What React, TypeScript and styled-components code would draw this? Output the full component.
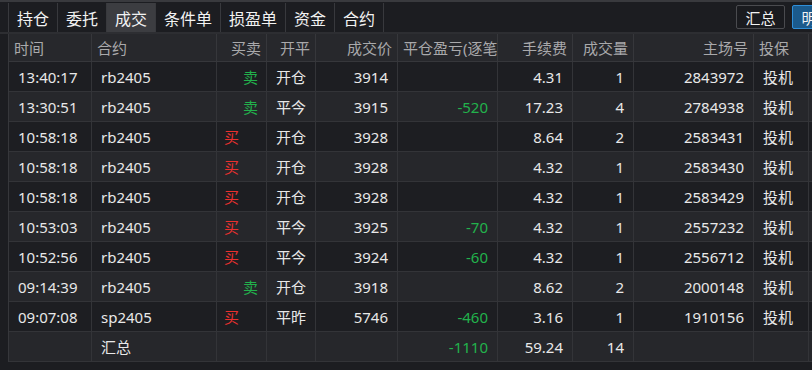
import React from 'react'
import styled, { createGlobalStyle } from 'styled-components'

const GlobalStyle = createGlobalStyle`
  html, body {
    margin: 0;
    padding: 0;
    background: #1c1d21;
  }
  body {
    font-family: "Noto Sans", "Noto Sans CJK SC", sans-serif;
    color: #e6e6e6;
  }
`

type Align = 'left' | 'right' | 'center'

type Trade = {
  time: string
  symbol: string
  side: 'buy' | 'sell'
  offset: string
  price: string
  pnl?: string
  fee: string
  qty: string
  account: string
  hedge: string
}

const trades: Trade[] = [
  { time: '13:40:17', symbol: 'rb2405', side: 'sell', offset: '开仓', price: '3914', fee: '4.31', qty: '1', account: '2843972', hedge: '投机' },
  { time: '13:30:51', symbol: 'rb2405', side: 'sell', offset: '平今', price: '3915', pnl: '-520', fee: '17.23', qty: '4', account: '2784938', hedge: '投机' },
  { time: '10:58:18', symbol: 'rb2405', side: 'buy', offset: '开仓', price: '3928', fee: '8.64', qty: '2', account: '2583431', hedge: '投机' },
  { time: '10:58:18', symbol: 'rb2405', side: 'buy', offset: '开仓', price: '3928', fee: '4.32', qty: '1', account: '2583430', hedge: '投机' },
  { time: '10:58:18', symbol: 'rb2405', side: 'buy', offset: '开仓', price: '3928', fee: '4.32', qty: '1', account: '2583429', hedge: '投机' },
  { time: '10:53:03', symbol: 'rb2405', side: 'buy', offset: '平今', price: '3925', pnl: '-70', fee: '4.32', qty: '1', account: '2557232', hedge: '投机' },
  { time: '10:52:56', symbol: 'rb2405', side: 'buy', offset: '平今', price: '3924', pnl: '-60', fee: '4.32', qty: '1', account: '2556712', hedge: '投机' },
  { time: '09:14:39', symbol: 'rb2405', side: 'sell', offset: '开仓', price: '3918', fee: '8.62', qty: '2', account: '2000148', hedge: '投机' },
  { time: '09:07:08', symbol: 'sp2405', side: 'buy', offset: '平昨', price: '5746', pnl: '-460', fee: '3.16', qty: '1', account: '1910156', hedge: '投机' },
]

const tabs = ['持仓', '委托', '成交', '条件单', '损盈单', '资金', '合约']

const columns: { title: string; align: Align }[] = [
  { title: '时间', align: 'left' },
  { title: '合约', align: 'left' },
  { title: '买卖', align: 'right' },
  { title: '开平', align: 'right' },
  { title: '成交价', align: 'right' },
  { title: '平仓盈亏(逐笔对冲)', align: 'left' },
  { title: '手续费', align: 'right' },
  { title: '成交量', align: 'right' },
  { title: '主场号', align: 'right' },
  { title: '投保', align: 'left' },
  { title: '', align: 'left' },
]

const Page = styled.div`
  width: 812px;
  height: 370px;
  overflow: hidden;
  display: flex;
  flex-direction: column;
  background: #1c1d21;
`

const TopBar = styled.div`
  display: flex;
  align-items: stretch;
  border-top: 2px solid #393a3e;
  padding-top: 1px;
  padding-left: 8px;
  box-sizing: border-box;
  height: 32px;
  background: #1c1d21;
`

const Tabs = styled.div`
  display: flex;
  border-right: 1px solid #38393d;
`

const Tab = styled.div<{ $active?: boolean }>`
  display: flex;
  align-items: center;
  padding: 0 8px;
  font-size: 16px;
  color: #f2f2f2;
  border-left: 1px solid #38393d;
  background: ${p => (p.$active ? '#3c3d41' : '#1c1d21')};
`

const Actions = styled.div`
  margin-left: auto;
  display: flex;
  align-items: flex-start;
  gap: 7px;
  padding-top: 2px;
  margin-right: -29px;
  flex-shrink: 0;
`

const ActionButton = styled.div<{ $primary?: boolean }>`
  width: 49px;
  height: 24px;
  box-sizing: border-box;
  display: flex;
  align-items: center;
  justify-content: center;
  font-size: 15px;
  color: #f2f2f2;
  border-radius: 2px;
  border: 1px solid ${p => (p.$primary ? '#2f8fd8' : '#4a4b4f')};
  background: ${p => (p.$primary ? '#1b5a8c' : '#1a1b1f')};
`

const Divider = styled.div`
  height: 2px;
  background: #2d2e32;
`

const TableArea = styled.div`
  padding-left: 8px;
  flex: 1;
`

const Grid = styled.div`
  display: grid;
  grid-template-columns: 83px 125px 50px 49px 82px 100px 75px 61px 120px 55px 60px;
  border-left: 1px solid #36373b;
  width: max-content;
`

const HeadCell = styled.div<{ $align: Align }>`
  height: 28px;
  box-sizing: border-box;
  padding: 0 5px;
  display: flex;
  align-items: center;
  justify-content: ${p =>
    p.$align === 'right' ? 'flex-end' : p.$align === 'center' ? 'center' : 'flex-start'};
  font-size: 15px;
  color: #a9a9ab;
  background: #27282c;
  border-right: 1px solid #36373b;
  border-bottom: 1px solid #36373b;
  white-space: nowrap;
  overflow: hidden;
`

const Cell = styled.div<{ $align: Align; $alt?: boolean; $tone?: 'up' | 'down' }>`
  height: 30px;
  box-sizing: border-box;
  padding: 0 9px;
  display: flex;
  align-items: center;
  justify-content: ${p =>
    p.$align === 'right' ? 'flex-end' : p.$align === 'center' ? 'center' : 'flex-start'};
  font-size: 15px;
  color: ${p => (p.$tone === 'up' ? '#e8312f' : p.$tone === 'down' ? '#22b24c' : '#e8e8e8')};
  background: ${p => (p.$alt ? '#26272b' : '#1d1e22')};
  border-right: 1px solid #333438;
  border-bottom: 1px solid #333438;
  white-space: nowrap;
  overflow: hidden;
`

const SideCell = styled(Cell)`
  padding: 0 8px 0 7px;
`

export default function App() {
  return (
    <>
      <GlobalStyle />
      <Page>
        <TopBar>
          <Tabs>
            {tabs.map(t => (
              <Tab key={t} $active={t === '成交'}>
                {t}
              </Tab>
            ))}
          </Tabs>
          <Actions>
            <ActionButton>汇总</ActionButton>
            <ActionButton $primary>明细</ActionButton>
          </Actions>
        </TopBar>
        <Divider />
        <TableArea>
          <Grid>
            {columns.map((c, i) => (
              <HeadCell key={i} $align={c.align}>
                {c.title}
              </HeadCell>
            ))}
            {trades.map((t, i) => {
              const alt = i % 2 === 1
              return (
                <React.Fragment key={i}>
                  <Cell $align="left" $alt={alt}>{t.time}</Cell>
                  <Cell $align="left" $alt={alt}>{t.symbol}</Cell>
                  <SideCell
                    $align={t.side === 'buy' ? 'left' : 'right'}
                    $alt={alt}
                    $tone={t.side === 'buy' ? 'up' : 'down'}
                  >
                    {t.side === 'buy' ? '买' : '卖'}
                  </SideCell>
                  <Cell $align="center" $alt={alt}>{t.offset}</Cell>
                  <Cell $align="right" $alt={alt}>{t.price}</Cell>
                  <Cell $align="right" $alt={alt} $tone="down">{t.pnl ?? ''}</Cell>
                  <Cell $align="right" $alt={alt}>{t.fee}</Cell>
                  <Cell $align="right" $alt={alt}>{t.qty}</Cell>
                  <Cell $align="right" $alt={alt}>{t.account}</Cell>
                  <Cell $align="left" $alt={alt}>{t.hedge}</Cell>
                  <Cell $align="left" $alt={alt} />
                </React.Fragment>
              )
            })}
            <Cell $align="left" $alt />
            <Cell $align="left" $alt>汇总</Cell>
            <Cell $align="left" $alt />
            <Cell $align="left" $alt />
            <Cell $align="left" $alt />
            <Cell $align="right" $alt $tone="down">-1110</Cell>
            <Cell $align="right" $alt>59.24</Cell>
            <Cell $align="right" $alt>14</Cell>
            <Cell $align="left" $alt />
            <Cell $align="left" $alt />
            <Cell $align="left" $alt />
          </Grid>
        </TableArea>
      </Page>
    </>
  )
}
